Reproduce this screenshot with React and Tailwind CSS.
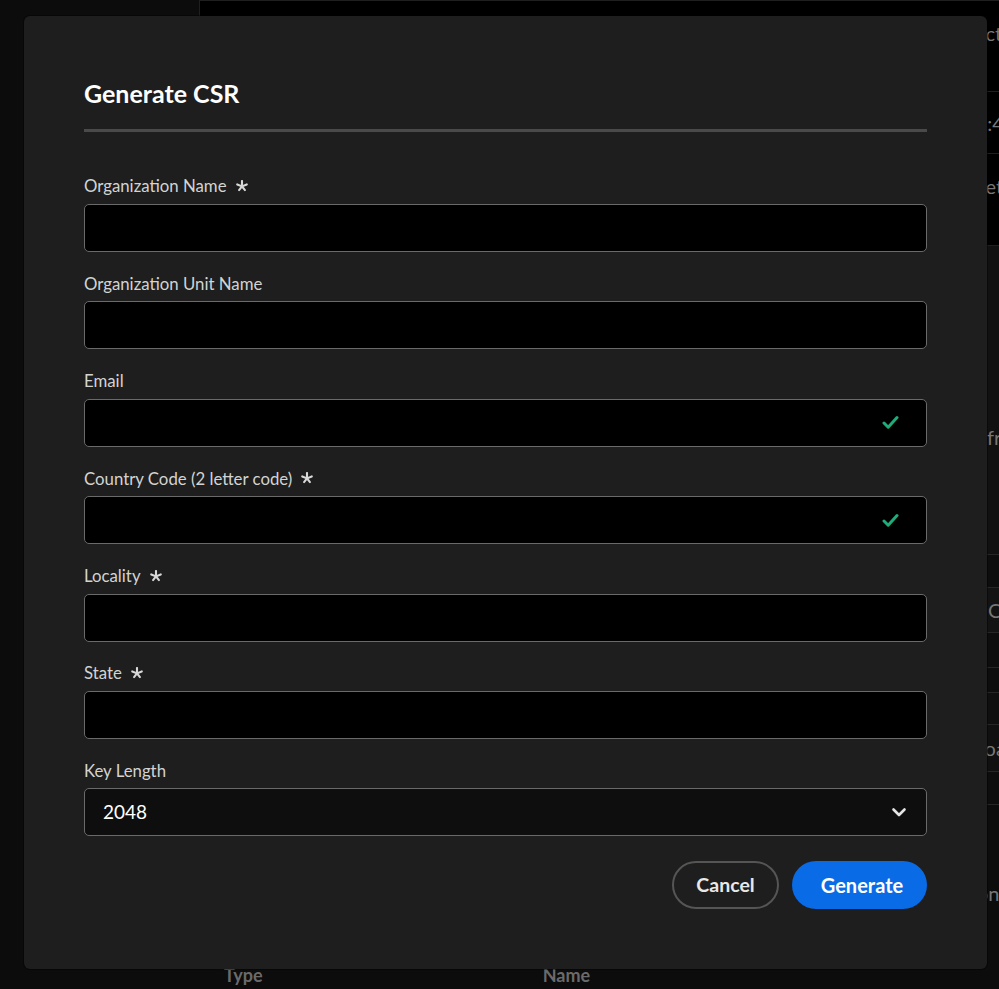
import React from 'react';

const font = { fontFamily: '"Lato", "Noto Sans", sans-serif' };

function Asterisk() {
  // five spokes, like the Spectrum required marker
  const spokes = [-90, -18, 54, 126, 198].map((a) => {
    const r = (a * Math.PI) / 180;
    return [6 + Math.cos(r) * 5, 6 + Math.sin(r) * 5];
  });
  return (
    <svg width="12" height="12" viewBox="0 0 12 12" className="ml-[9px]">
      {spokes.map(([x, y], i) => (
        <line key={i} x1="6" y1="6.4" x2={x} y2={y} stroke="#d8d8d8" strokeWidth="2.1" strokeLinecap="round" />
      ))}
    </svg>
  );
}

function Check() {
  return (
    <svg width="17" height="15" viewBox="0 0 17 15" fill="none">
      <path d="M2 8 L6.2 12.2 L15 2.5" stroke="#1fab7a" strokeWidth="3" strokeLinecap="round" strokeLinejoin="round" />
    </svg>
  );
}

function Field({ label, required, valid }) {
  return (
    <div className="flex flex-col">
      <label className="flex h-6 items-center text-[16.8px] text-[#d3d3d3]">
        {label}
        {required && <Asterisk />}
      </label>
      <div className="mt-[6px] flex h-12 items-center justify-end rounded-[5px] border border-[#6a6a6a] bg-black pr-[27px]">
        {valid && <Check />}
      </div>
    </div>
  );
}

const fields = [
  { label: 'Organization Name', required: true },
  { label: 'Organization Unit Name' },
  { label: 'Email', valid: true },
  { label: 'Country Code (2 letter code)', required: true, valid: true },
  { label: 'Locality', required: true },
  { label: 'State', required: true },
];

const rowText = 'whitespace-nowrap overflow-hidden text-[20px] leading-6 text-[#777]';

export default function App() {
  return (
    <div className="relative h-[989px] w-[999px] overflow-hidden bg-[#0c0c0c]" style={font}>
      {/* dimmed page behind the dialog */}
      <div className="flex h-full">
        <div className="w-[199px] shrink-0 bg-[#0c0c0c]" />
        <div className="flex min-w-0 flex-1 flex-col">
          <div className={`h-[92px] border-b border-l border-t border-[#1f1f1f] bg-black pl-[733px] pt-[20px] ${rowText}`}>
            Product
          </div>
          <div className={`flex h-[62px] items-center border-b border-l border-[#1f1f1f] bg-black pl-[764px] ${rowText}`}>
            10:45
          </div>
          <div className={`h-[92px] border-b border-l border-[#1f1f1f] bg-black pl-[771px] pt-[20px] ${rowText}`}>
            Get
          </div>
          <div className={`h-[309px] border-b border-[#262626] bg-[#111] pl-[788px] pt-[179px] ${rowText}`}>
            from
          </div>
          <div className="h-[33px] border-b border-[#262626] bg-[#0d0d0d]" />
          <div className={`flex h-[45px] items-center border-b border-[#262626] bg-[#131313] pl-[789px] ${rowText}`}>
            Close
          </div>
          <div className="h-[35px] border-b border-[#262626] bg-[#0d0d0d]" />
          <div className="h-[25px] border-b border-[#262626] bg-[#0d0d0d]" />
          <div className="h-[32px] border-b border-[#262626] bg-[#0f0f0f]" />
          <div className={`flex h-[47px] items-center border-b border-[#262626] bg-[#101010] pl-[776px] ${rowText} text-[#666]`}>
            Load
          </div>
          <div className="h-[33px] border-b border-[#262626] bg-[#0d0d0d]" />
          <div className={`h-[144px] bg-[#0c0c0c] pl-[763px] pt-[76px] ${rowText}`}>
            None
          </div>
          <div className="flex h-[40px] items-start gap-[280px] pl-[25px] pt-[14px] text-[18px] font-bold leading-6 text-[#6a6a6a]">
            <span>Type</span>
            <span>Name</span>
          </div>
        </div>
      </div>

      {/* dialog */}
      <div className="absolute left-[24px] top-[16px] flex h-[953px] w-[963px] flex-col rounded-[6px] bg-[#1e1e1e] px-[60px] pb-[60px] pt-[62px] shadow-[0_0_0_1px_rgba(0,0,0,0.4)]">
        <h1 className="text-[25px] font-bold leading-[30px] text-white">Generate CSR</h1>
        <div className="mt-[21px] h-[3px] bg-[#4a4a4a]" />

        <div className="mt-[42px] flex flex-col gap-[19.4px]">
          {fields.map((f) => (
            <Field key={f.label} {...f} />
          ))}
          <div className="flex flex-col">
            <label className="flex h-6 items-center text-[16.8px] text-[#d3d3d3]">Key Length</label>
            <div className="mt-[6px] flex h-12 items-center justify-between rounded-[5px] border border-[#6a6a6a] bg-[#0e0e0e] pl-[18px] pr-[19px]">
              <span className="text-[19px] text-white">2048</span>
              <svg width="16" height="12" viewBox="0 0 16 12" fill="none">
                <path d="M2.5 3.5 L8 9 L13.5 3.5" stroke="#e5e5e5" strokeWidth="2.6" strokeLinecap="round" strokeLinejoin="round" />
              </svg>
            </div>
          </div>
        </div>

        <div className="mt-auto flex justify-end gap-[13px]">
          <button className="h-12 w-[107px] rounded-full border-2 border-[#555] text-[19.5px] font-bold text-[#e8e8e8]">
            Cancel
          </button>
          <button className="h-12 w-[135px] rounded-full bg-[#0a6be6] pl-[5px] text-[20px] font-bold text-white">
            Generate
          </button>
        </div>
      </div>
    </div>
  );
}
